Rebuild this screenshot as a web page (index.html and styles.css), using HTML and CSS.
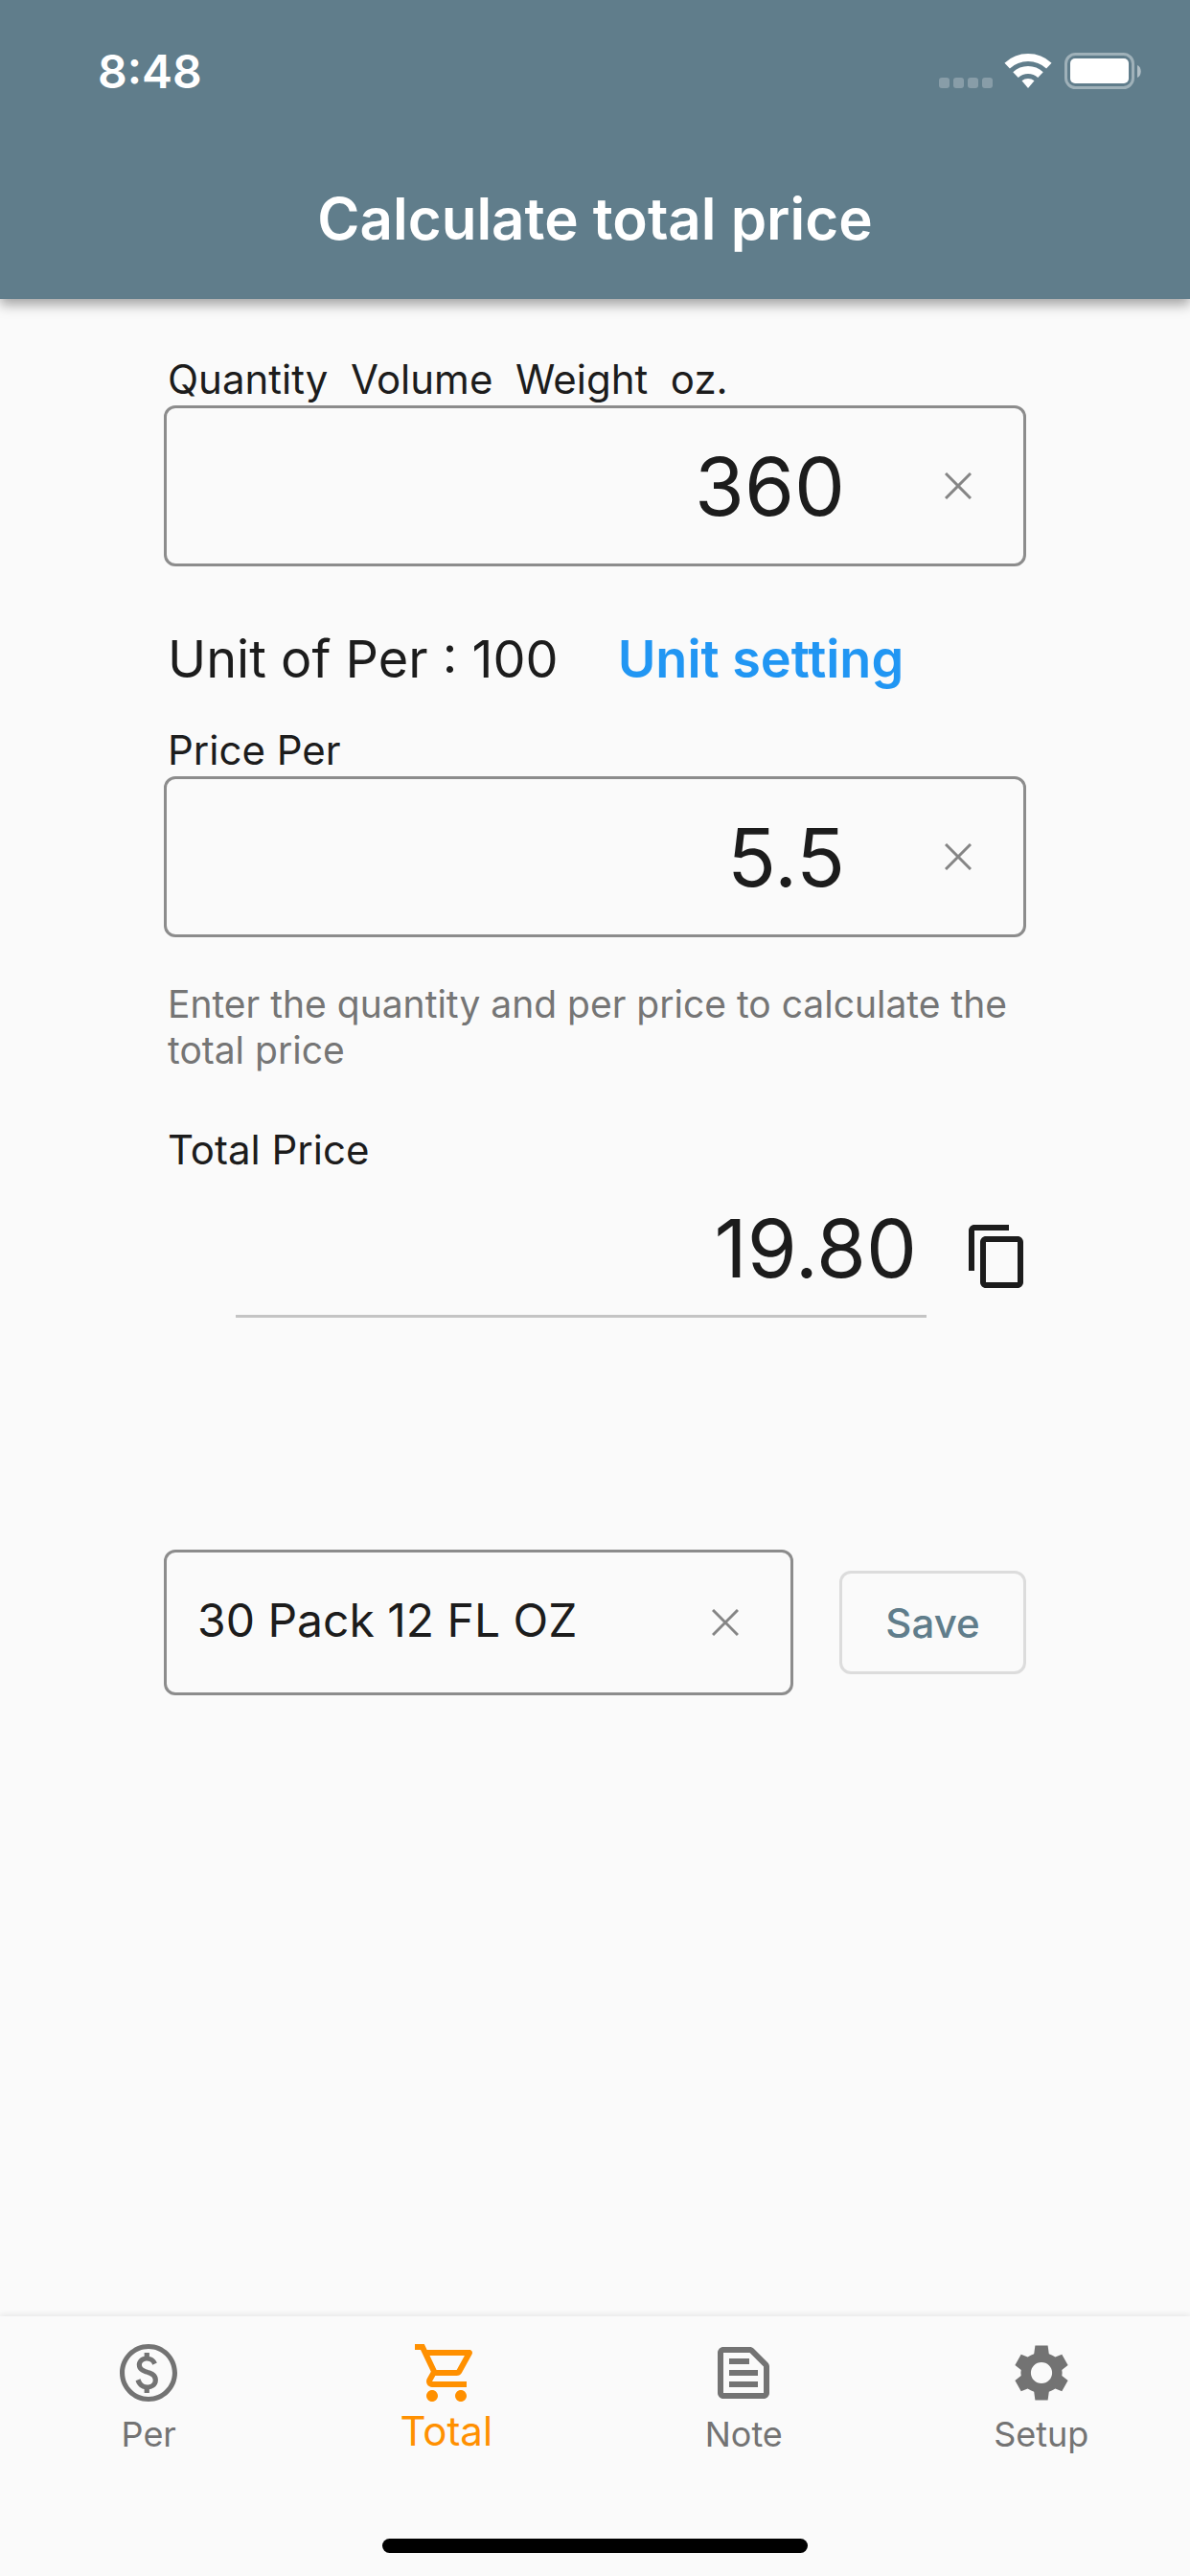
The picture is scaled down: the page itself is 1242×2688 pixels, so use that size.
FILE: index.html
```html
<!DOCTYPE html>
<html lang="en">
<head>
    <meta charset="UTF-8">
    <meta name="viewport" content="width=device-width, initial-scale=1.0">
    <title>Calculate total price</title>
    <link rel="stylesheet" href="styles.css">
</head>
<body>
    <header class="app-bar">
        <div class="status-bar">
            <span class="clock">8:48</span>
            <svg class="status-icons" width="214" height="48" viewBox="0 0 214 48" aria-hidden="true">
                <g fill="#fff" fill-opacity="0.25">
                    <rect x="0" y="31" width="11" height="11" rx="3"/>
                    <rect x="15" y="31" width="11" height="11" rx="3"/>
                    <rect x="30" y="31" width="11" height="11" rx="3"/>
                    <rect x="45" y="31" width="11" height="11" rx="3"/>
                </g>
                <g fill="none" stroke="#fff" stroke-width="8">
                    <path d="M71.200 18.600A32 32 0 0 1 114.800 18.600"/>
                    <path d="M80 28.100A19 19 0 0 1 106 28.100"/>
                </g>
                <path d="M86.500 34.300a10.500 10.500 0 0 1 13 0L93 42z" fill="#fff"/>
                <rect x="132.500" y="6.500" width="70" height="35" rx="10" fill="none" stroke="#fff" stroke-opacity="0.4" stroke-width="3"/>
                <rect x="137" y="11" width="61" height="26" rx="5" fill="#fff"/>
                <path d="M207 18c5 2 5 11 0 13z" fill="#fff" fill-opacity="0.5"/>
            </svg>
        </div>
        <h1 class="title">Calculate total price</h1>
    </header>

    <main class="content">
        <form class="calc-form">
            <label class="field-label" for="quantity">Quantity&nbsp; Volume&nbsp; Weight&nbsp; oz.</label>
            <div class="field">
                <input class="field-input number" type="text" id="quantity" inputmode="decimal" value="360">
                <button class="clear" type="button" aria-label="Clear quantity">
                    <svg width="28" height="28" viewBox="0 0 28 28"><path d="M1 1l26 26M27 1L1 27"/></svg>
                </button>
            </div>

            <div class="unit-row">
                <span>Unit of Per : 100</span>
                <a class="unit-link" href="#unit">Unit setting</a>
            </div>

            <label class="field-label" for="price">Price Per</label>
            <div class="field">
                <input class="field-input number" type="text" id="price" inputmode="decimal" value="5.5">
                <button class="clear" type="button" aria-label="Clear price">
                    <svg width="28" height="28" viewBox="0 0 28 28"><path d="M1 1l26 26M27 1L1 27"/></svg>
                </button>
            </div>

            <p class="hint">Enter the quantity and per price to calculate the total price</p>

            <label class="field-label" for="total">Total Price</label>
            <div class="total-row">
                <output class="total" id="total" for="quantity price">19.80</output>
                <button class="copy" type="button" aria-label="Copy total">
                    <svg width="72" height="72" viewBox="0 0 24 24"><path d="M16 1H4c-1.100 0-2 .9-2 2v14h2V3h12V1zm3 4H8c-1.100 0-2 .9-2 2v14c0 1.100.9 2 2 2h11c1.100 0 2-.9 2-2V7c0-1.100-.9-2-2-2zm0 16H8V7h11v14z"/></svg>
                </button>
            </div>

            <div class="save-row">
                <div class="field memo">
                    <input class="field-input" type="text" aria-label="Memo" value="30 Pack 12 FL OZ">
                    <button class="clear" type="button" aria-label="Clear memo">
                        <svg width="28" height="28" viewBox="0 0 28 28"><path d="M1 1l26 26M27 1L1 27"/></svg>
                    </button>
                </div>
                <button class="save" type="submit">Save</button>
            </div>
        </form>
    </main>

    <nav class="tab-bar">
        <div class="tabs">
            <a class="tab" href="#per">
                <svg width="72" height="72" viewBox="0 0 24 24"><path d="M12 2C6.480 2 2 6.480 2 12s4.480 10 10 10 10-4.480 10-10S17.520 2 12 2zm0 18.300c-4.580 0-8.300-3.720-8.300-8.300S7.420 3.700 12 3.700s8.300 3.720 8.300 8.300-3.720 8.300-8.300 8.300zm.31-9.140c-1.780-.59-2.640-.96-2.640-1.900 0-1.020 1.110-1.390 1.810-1.390 1.310 0 1.790.99 1.900 1.340l1.580-.67c-.15-.44-.82-1.910-2.660-2.230V5h-1.750v1.260c-2.600.56-2.620 2.850-2.620 2.960 0 2.270 2.250 2.910 3.350 3.310 1.580.56 2.280 1.070 2.280 2.030 0 1.130-1.050 1.610-1.980 1.610-1.820 0-2.340-1.870-2.400-2.090l-1.660.67c.63 2.190 2.280 2.780 3.020 2.960V19h1.750v-1.240c.52-.09 3.020-.59 3.020-3.220.01-1.390-.6-2.610-3-3.440z"/></svg>
                <span>Per</span>
            </a>
            <a class="tab active" href="#total-price" aria-current="page">
                <svg width="72" height="72" viewBox="0 0 24 24"><path d="M15.550 13c.75 0 1.410-.41 1.750-1.030l3.580-6.490c.37-.66-.11-1.480-.87-1.480H5.210l-.94-2H1v2h2l3.600 7.590-1.350 2.440C4.520 15.370 5.480 17 7 17h12v-2H7l1.100-2h7.450zM6.160 6h12.150l-2.760 5H8.530L6.160 6zM7 18c-1.100 0-1.990.9-1.990 2S5.900 22 7 22s2-.9 2-2-.9-2-2-2zm10 0c-1.100 0-1.990.9-1.990 2s.89 2 1.990 2 2-.9 2-2-.9-2-2-2z"/></svg>
                <span>Total</span>
            </a>
            <a class="tab" href="#note">
                <svg width="72" height="72" viewBox="0 0 24 24"><path d="M20.410 8.410l-4.830-4.830c-.37-.37-.88-.58-1.410-.58H5c-1.100 0-2 .9-2 2v14c0 1.100.9 2 2 2h14c1.100 0 2-.9 2-2V9.830c0-.53-.21-1.040-.59-1.420zM19 19H5V5h9.170L19 9.830V19zM7 7h7v2H7zM7 11h10v2H7zM7 15h10v2H7z"/></svg>
                <span>Note</span>
            </a>
            <a class="tab" href="#setup">
                <svg width="72" height="72" viewBox="0 0 24 24"><path fill-rule="evenodd" d="M9.800 2.500h4.400l.4 2.900q1.200.4 2.200 1.100L19.100 5.600l2.100 3.700-2.100 1.700q.2 1 0 2l2.100 1.700-2.100 3.700-2.300-.9q-1 .7-2.200 1.100l-.4 2.900H9.800l-.4-2.900q-1.200-.4-2.200-1.100l-2.300.9-2.100-3.700 2.100-1.700q-.2-1 0-2L2.800 9.300l2.100-3.700 2.300.9q1-.7 2.200-1.100zM12 8.300a3.700 3.700 0 1 0 0 7.400 3.700 3.700 0 0 0 0-7.400z"/></svg>
                <span>Setup</span>
            </a>
        </div>
        <div class="home-indicator"></div>
    </nav>
</body>
</html>
```
FILE: styles.css
```css
* {
    box-sizing: border-box;
}

body {
    margin: 0;
    min-height: 100vh;
    display: flex;
    flex-direction: column;
    background-color: #fafafa;
    color: #1c1c1c;
    font-family: Inter, "Liberation Sans", sans-serif;
}

input, button {
    margin: 0;
    padding: 0;
    border: none;
    background: none;
    color: inherit;
    font-family: inherit;
}

button {
    cursor: pointer;
}

svg {
    display: block;
    fill: currentColor;
}

/* Header */
.app-bar {
    background-color: #607d8b;
    color: #fff;
    box-shadow: 0 6px 12px rgba(0, 0, 0, 0.35);
}

.status-bar {
    display: flex;
    justify-content: space-between;
    align-items: center;
    height: 144px;
    padding: 4px 48px 0 102px;
}

.clock {
    font-size: 48px;
    font-weight: 600;
}

.title {
    margin: 0;
    height: 168px;
    line-height: 168px;
    text-align: center;
    font-size: 60px;
    font-weight: 600;
}

/* Form */
.content {
    flex: 1;
    padding: 60px 171px 0;
}

.field-label {
    display: block;
    padding: 0 0 3px 4px;
    font-size: 42px;
    line-height: 48px;
}

.field {
    display: flex;
    align-items: center;
    height: 168px;
    padding-right: 54px;
    border: 3px solid #8c8c8c;
    border-radius: 12px;
}

.field-input {
    flex: 1;
    min-width: 0;
    outline: none;
    font-size: 48px;
}

.number {
    text-align: right;
    font-size: 84px;
}

.clear {
    margin-left: 104px;
    color: #858585;
}

.clear svg {
    fill: none;
    stroke: currentColor;
    stroke-width: 3;
}

.unit-row {
    display: flex;
    align-items: center;
    gap: 62px;
    height: 168px;
    padding: 24px 4px 0;
    font-size: 54px;
}

.unit-link {
    color: #2196f3;
    font-weight: 600;
    text-decoration: none;
}

.hint {
    margin: 46px 0 56px;
    padding-left: 4px;
    color: #757575;
    font-size: 39px;
    line-height: 48px;
}

.total-row {
    display: flex;
    gap: 38px;
    padding-left: 75px;
}

.total {
    flex: 1;
    height: 148px;
    padding-right: 10px;
    border-bottom: 3px solid #c4c4c4;
    text-align: right;
    font-size: 84px;
    line-height: 152px;
}

.copy {
    align-self: flex-end;
    margin: 0 -6px 28px 0;
}

.save-row {
    display: flex;
    align-items: center;
    gap: 48px;
    margin-top: 242px;
}

.memo {
    flex: 1;
    min-width: 0;
    height: 152px;
    padding-left: 32px;
}

.memo .field-input {
    padding-bottom: 6px;
}

.memo .clear {
    margin-left: 24px;
}

.save {
    flex-shrink: 0;
    width: 195px;
    height: 108px;
    border: 3px solid #dcdcdc;
    border-radius: 12px;
    color: #607d8b;
    font-size: 42px;
    font-weight: 500;
}

/* Bottom navigation */
.tab-bar {
    height: 271px;
    display: flex;
    flex-direction: column;
    justify-content: space-between;
    align-items: center;
    padding: 23px 0 24px;
    background-color: #fafafa;
    box-shadow: 0 -2px 6px rgba(0, 0, 0, 0.08);
}

.tabs {
    display: grid;
    grid-template-columns: repeat(4, 1fr);
    width: 100%;
}

.tab {
    display: flex;
    flex-direction: column;
    align-items: center;
    color: #737373;
    font-size: 36px;
    line-height: 56px;
    text-decoration: none;
}

.tab.active {
    color: #ff9000;
    font-size: 42px;
    line-height: 50px;
}

.home-indicator {
    width: 444px;
    height: 15px;
    border-radius: 8px;
    background-color: #000;
}
```
